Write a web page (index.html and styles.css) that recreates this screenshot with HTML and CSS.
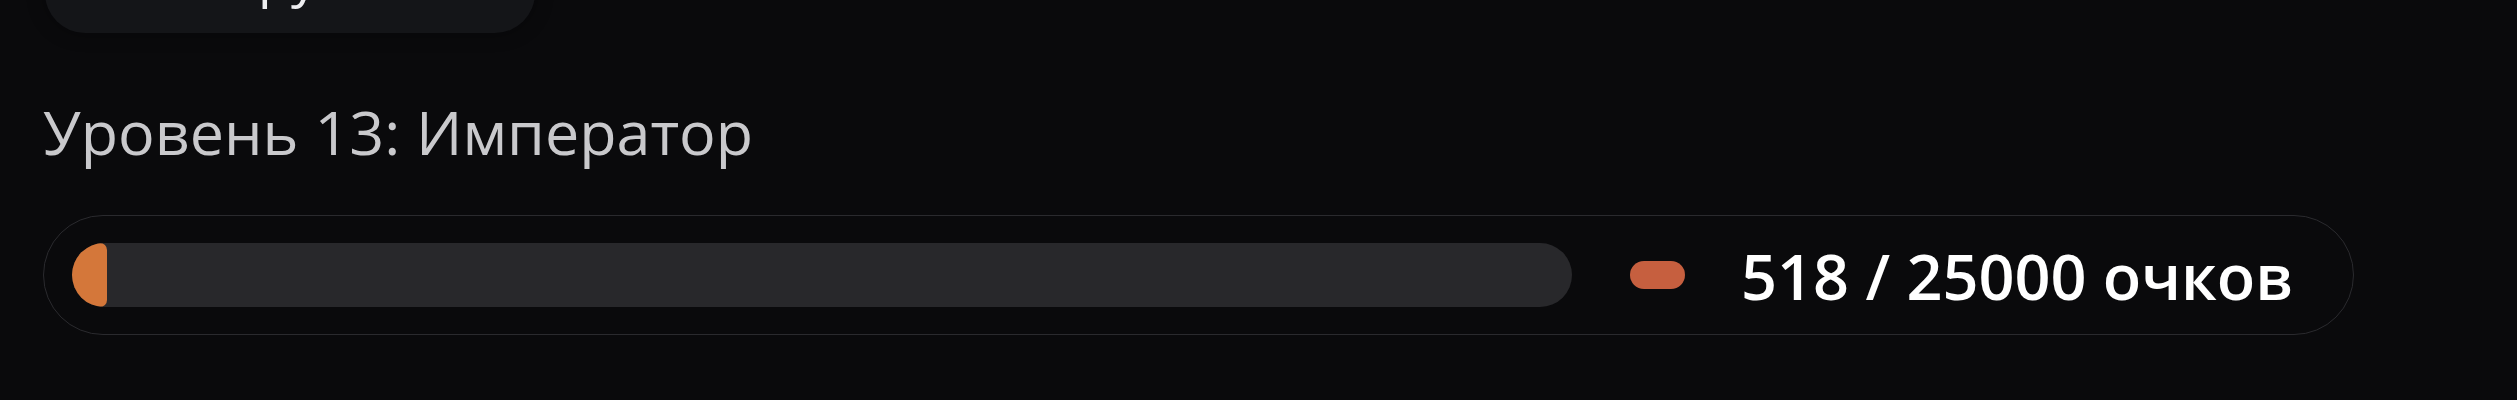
FILE: index.html
```html
<!DOCTYPE html>
<html lang="ru">
<head>
<meta charset="utf-8">
<title>Уровень</title>
<link rel="stylesheet" href="styles.css">
</head>
<body>
<main class="page">
  <button class="group-btn" type="button">
    <svg class="group-btn__icon" viewBox="0 0 24 24" width="40" height="40" aria-hidden="true">
      <circle cx="9" cy="8" r="4" fill="none" stroke="#e8e8ea" stroke-width="2"/>
      <path d="M2 21c0-4 3-6 7-6s7 2 7 6" fill="none" stroke="#e8e8ea" stroke-width="2" stroke-linecap="round"/>
      <path d="M16 4a4 4 0 0 1 0 8M18 15c2.5.6 4 2.6 4 6" fill="none" stroke="#e8e8ea" stroke-width="2" stroke-linecap="round"/>
    </svg>
    <span class="group-btn__label">Группа</span>
  </button>

  <h2 class="level-title">Уровень 13: Император</h2>

  <div class="level-bar">
    <div class="level-bar__track">
      <div class="level-bar__fill" style="width: 35px"></div>
    </div>
    <span class="level-bar__marker"></span>
    <span class="level-bar__points">518 / 25000 очков</span>
  </div>
</main>
</body>
</html>
```

FILE: styles.css
```css
html, body {
  margin: 0;
  background: #0a0a0c;
}

body {
  font-family: "Open Sans", "Noto Sans", sans-serif;
  overflow: hidden;
  height: 400px;
}

.page {
  width: 2311px;
  padding-left: 43px;
  display: flex;
  flex-direction: column;
  align-items: flex-start;
}

/* Button sitting at the top edge of the viewport */
.group-btn {
  margin-top: -47px;
  margin-left: 2px;
  width: 490px;
  height: 80px;
  border: none;
  border-radius: 40px;
  background: #141518;
  color: #eeeef0;
  font-family: inherit;
  font-size: 54px;
  display: flex;
  align-items: center;
  gap: 70px;
  padding: 0 0 36px 75px;
  box-sizing: border-box;
  box-shadow: 0 0 18px rgba(0, 0, 0, 0.35);
}

.group-btn__icon {
  flex: none;
  margin-top: -10px;
}

.group-btn__label {
  line-height: 1;
}

.level-title {
  margin: 63px 0 0 0;
  font-size: 61px;
  line-height: 72px;
  font-weight: 400;
  color: #c9c9cc;
  letter-spacing: 0;
}

.level-bar {
  margin-top: 47px;
  box-sizing: border-box;
  width: 2311px;
  height: 120px;
  border: 1.5px solid #2a2a2e;
  border-radius: 60px;
  padding: 0 60px 0 28px;
  display: flex;
  align-items: center;
}

.level-bar__track {
  flex: 0 0 1500px;
  height: 64px;
  border-radius: 32px;
  background: #28282b;
  overflow: hidden;
  display: flex;
}

.level-bar__fill {
  height: 100%;
  background: #d4773a;
  border-radius: 32px 8px 8px 32px;
}

.level-bar__marker {
  flex: none;
  margin-left: 58px;
  width: 55px;
  height: 28px;
  border-radius: 14px;
  background: #c65f3f;
}

.level-bar__points {
  margin-left: 56px;
  font-size: 63px;
  font-weight: 600;
  color: #ffffff;
  line-height: 1;
  white-space: nowrap;
  letter-spacing: 0;
}
```
